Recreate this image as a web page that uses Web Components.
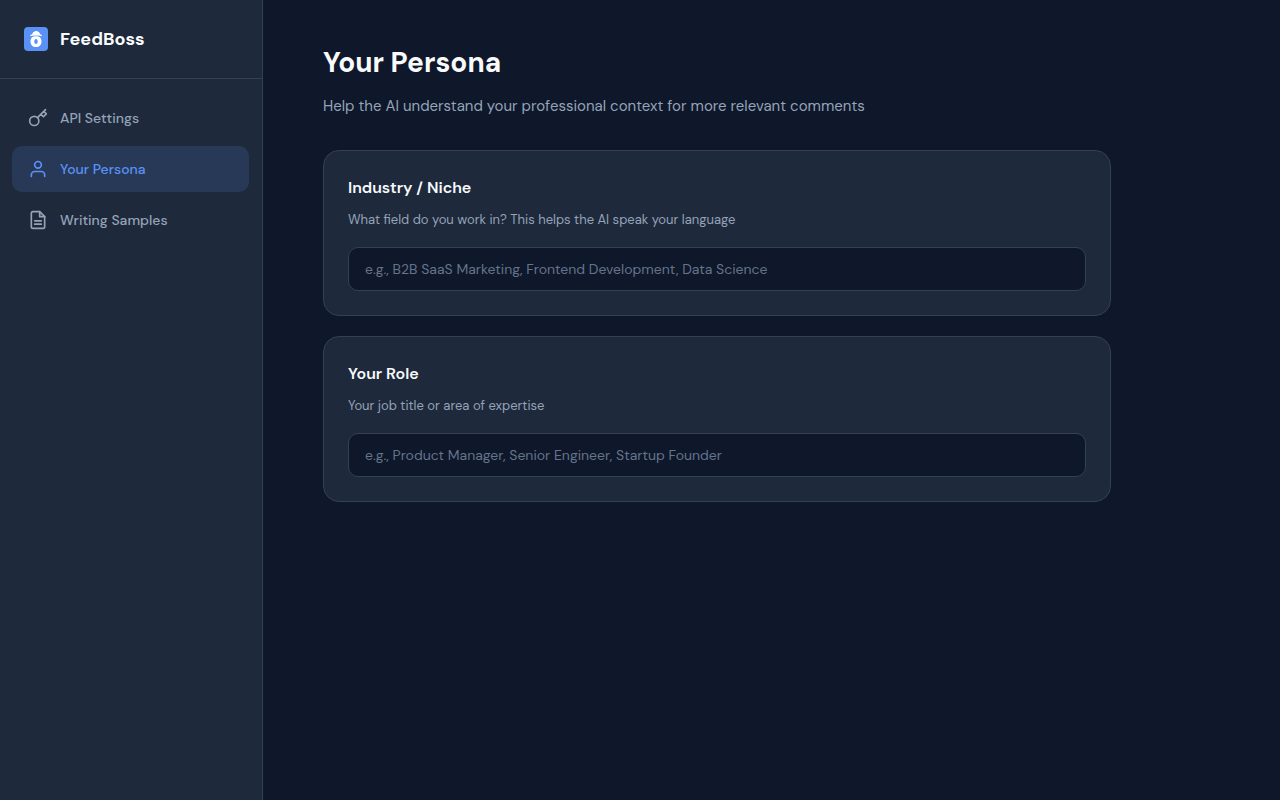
<!DOCTYPE html>
<html lang="en">
<head>
<meta charset="utf-8">
<meta name="viewport" content="width=device-width, initial-scale=1">
<title>FeedBoss</title>
<style>
  :root {
    --bg: #0f172a;
    --panel: #1e293b;
    --line: #334155;
    --text: #f8fafc;
    --muted: #94a3b8;
    --faint: #64748b;
    --accent: #5a91f6;
    --accent-soft: #273957;
  }
  body {
    margin: 0;
    background: var(--bg);
    color: var(--text);
    font-family: "DM Sans", Inter, sans-serif;
  }
</style>
</head>
<body>
<feed-app>
  <app-sidebar slot="sidebar">
    <nav-item icon="key" href="#api">API Settings</nav-item>
    <nav-item icon="user" href="#persona" active>Your Persona</nav-item>
    <nav-item icon="file" href="#samples">Writing Samples</nav-item>
  </app-sidebar>
  <settings-page>
    <span slot="title">Your Persona</span>
    <span slot="subtitle">Help the AI understand your professional context for more relevant comments</span>
    <field-card
      label="Industry / Niche"
      hint="What field do you work in? This helps the AI speak your language"
      placeholder="e.g., B2B SaaS Marketing, Frontend Development, Data Science"></field-card>
    <field-card
      label="Your Role"
      hint="Your job title or area of expertise"
      placeholder="e.g., Product Manager, Senior Engineer, Startup Founder"></field-card>
  </settings-page>
</feed-app>

<script>
class FeedApp extends HTMLElement {
  constructor() {
    super();
    this.attachShadow({ mode: 'open' });
    this.shadowRoot.innerHTML = `
      <style>
        :host {
          display: grid;
          grid-template-columns: 263px 1fr;
          min-height: 100vh;
        }
        main {
          min-width: 0;
          padding: 40px 60px;
        }
      </style>
      <slot name="sidebar"></slot>
      <main><slot></slot></main>
    `;
  }
}

class AppSidebar extends HTMLElement {
  constructor() {
    super();
    this.attachShadow({ mode: 'open' });
    this.shadowRoot.innerHTML = `
      <style>
        :host {
          display: block;
          background: var(--panel);
          border-right: 1px solid var(--line);
        }
        header {
          display: flex;
          align-items: center;
          gap: 12px;
          padding: 24px;
          border-bottom: 1px solid var(--line);
          font-size: 18px;
          font-weight: 700;
          line-height: 30px;
        }
        svg {
          width: 24px;
          height: 24px;
        }
        nav {
          display: flex;
          flex-direction: column;
          gap: 5px;
          padding: 16px 13px 16px 12px;
        }
      </style>
      <header>
        <svg viewBox="0 0 24 24" aria-hidden="true">
          <rect width="24" height="24" rx="4" fill="var(--accent)"/>
          <path fill="#fff" d="M6.500 9.300c-.6-.7-.1-1.500 1.200-1.800.4-.1.700-.3.800-.8.200-1.200.8-1.900 1.700-1.700.4-1 1.200-1.300 2-.8.800-.4 1.800-.1 2.100.7.900 0 1.300.7 1.500 1.700.1.500.3.700.8.900 1.200.4 1.500 1.100.9 1.800-1.300-.5-2-.6-2.600-.6H9.300c-.9 0-1.700.2-2.800.6z"/>
          <path fill="#fff" fill-rule="evenodd" d="M12 8.700c-3.400 0-5.500 2.300-5.500 5.700S8.600 20 12 20s5.500-2.200 5.500-5.600-2.100-5.700-5.500-5.700zm0 3.300c1.100 0 1.700.9 1.700 2.500S13.100 17 12 17s-1.700-.9-1.700-2.500.6-2.500 1.700-2.500z"/>
          <path fill="none" stroke="var(--accent)" stroke-width=".5" d="M7.300 9.500c2.800-.7 6.600-.7 9.400 0"/>
        </svg>
        <span>FeedBoss</span>
      </header>
      <nav aria-label="Settings"><slot></slot></nav>
    `;
  }
}

const icons = {
  key: '<circle cx="7.500" cy="15.500" r="5.500"/><path d="M21 2l-9.600 9.600M15.500 7.500l3 3L22 7l-3-3"/>',
  user: '<path d="M20 21v-2a4 4 0 0 0-4-4H8a4 4 0 0 0-4 4v2"/><circle cx="12" cy="7" r="4"/>',
  file: '<path d="M14 2H6a2 2 0 0 0-2 2v16a2 2 0 0 0 2 2h12a2 2 0 0 0 2-2V8z"/><path d="M14 2v6h6M16 13H8M16 17H8"/>',
};

class NavItem extends HTMLElement {
  constructor() {
    super();
    this.attachShadow({ mode: 'open' });
  }

  connectedCallback() {
    const current = this.hasAttribute('active') ? 'aria-current="page"' : '';
    this.shadowRoot.innerHTML = `
      <style>
        :host {
          display: block;
        }
        a {
          display: flex;
          align-items: center;
          gap: 12px;
          padding: 12px 16px;
          border-radius: 10px;
          color: var(--muted);
          font-size: 14px;
          font-weight: 500;
          line-height: 22px;
          text-decoration: none;
        }
        a[aria-current] {
          background: var(--accent-soft);
          color: var(--accent);
        }
        svg {
          width: 20px;
          height: 20px;
          fill: none;
          stroke: currentColor;
          stroke-width: 2;
          stroke-linecap: round;
          stroke-linejoin: round;
        }
      </style>
      <a href="${this.getAttribute('href')}" ${current}>
        <svg viewBox="0 0 24 24" aria-hidden="true">${icons[this.getAttribute('icon')]}</svg>
        <span><slot></slot></span>
      </a>
    `;
  }
}

class SettingsPage extends HTMLElement {
  constructor() {
    super();
    this.attachShadow({ mode: 'open' });
    this.shadowRoot.innerHTML = `
      <style>
        :host {
          display: block;
          max-width: 788px;
        }
        h1 {
          margin: 0 0 8px;
          font-size: 28px;
          font-weight: 700;
          line-height: 46px;
        }
        p {
          margin: 0 0 32px;
          color: var(--muted);
          font-size: 15px;
          line-height: 24px;
        }
        .cards {
          display: flex;
          flex-direction: column;
          gap: 20px;
        }
      </style>
      <h1><slot name="title"></slot></h1>
      <p><slot name="subtitle"></slot></p>
      <div class="cards"><slot></slot></div>
    `;
  }
}

class FieldCard extends HTMLElement {
  constructor() {
    super();
    this.attachShadow({ mode: 'open' });
  }

  connectedCallback() {
    this.shadowRoot.innerHTML = `
      <style>
        :host {
          display: block;
          padding: 24px;
          background: var(--panel);
          border: 1px solid var(--line);
          border-radius: 16px;
        }
        label {
          display: block;
          font-size: 16px;
          font-weight: 600;
          line-height: 26px;
        }
        p {
          margin: 8px 0 16px;
          color: var(--muted);
          font-size: 13px;
          line-height: 22px;
        }
        input {
          display: block;
          box-sizing: border-box;
          width: 100%;
          height: 44px;
          padding: 0 16px;
          background: var(--bg);
          border: 1px solid var(--line);
          border-radius: 10px;
          color: var(--text);
          font: inherit;
          font-size: 14px;
        }
        input::placeholder {
          color: var(--faint);
        }
        input:focus {
          outline: none;
          border-color: var(--accent);
        }
      </style>
      <label for="field">${this.getAttribute('label')}</label>
      <p id="hint">${this.getAttribute('hint')}</p>
      <input id="field" type="text" aria-describedby="hint" placeholder="${this.getAttribute('placeholder')}">
    `;
  }
}

customElements.define('feed-app', FeedApp);
customElements.define('app-sidebar', AppSidebar);
customElements.define('nav-item', NavItem);
customElements.define('settings-page', SettingsPage);
customElements.define('field-card', FieldCard);
</script>
</body>
</html>
